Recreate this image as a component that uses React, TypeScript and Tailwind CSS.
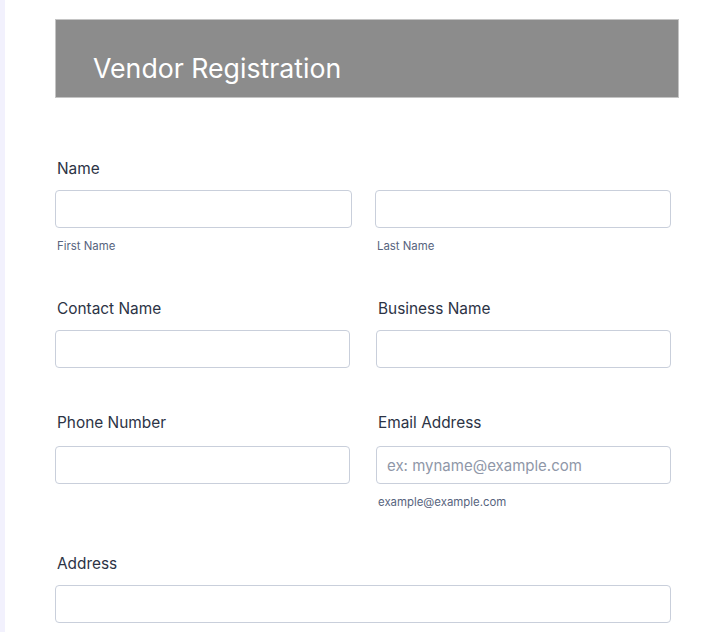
import React from "react";

const font = { fontFamily: "Inter, 'Noto Sans', sans-serif" };

function Label({ text, className = "" }: { text: string; className?: string }) {
  return (
    <label className={`block h-5 text-[15.4px] leading-[22px] text-[#2c3345] ${className}`}>{text}</label>
  );
}

function Input({ placeholder, className = "" }: { placeholder?: string; className?: string }) {
  return (
    <input
      type="text"
      placeholder={placeholder}
      className={`block h-[38px] rounded-[4px] border border-[#c9cfdb] bg-white px-[10px] text-[15px] text-[#2c3345] placeholder:text-[#8f97a8] outline-none ${className}`}
    />
  );
}

function Sub({ text, className = "" }: { text: string; className?: string }) {
  return <div className={`mt-[10px] h-4 text-[11.4px] leading-4 text-[#57647e] ${className}`}>{text}</div>;
}

export default function App() {
  return (
    <div className="flex h-[632px] w-[715px] overflow-hidden bg-white" style={font}>
      <div className="w-[5px] shrink-0 bg-[#f2f1fd]" />
      <div className="flex-1 pl-[50px] pt-[19px]">
        {/* header */}
        <div className="flex h-[79px] w-[624px] items-center border border-[#c4c4c4] bg-[#8c8c8c] pl-[37px] pt-[19px]">
          <h1 className="text-[26.7px] font-normal text-white">Vendor Registration</h1>
        </div>

        {/* Name */}
        <Label text="Name" className="ml-[2px] mt-[60px]" />
        <div className="mt-3 flex">
          <div>
            <Input className="w-[297px]" />
            <Sub text="First Name" className="ml-[2px]" />
          </div>
          <div className="ml-[23px]">
            <Input className="w-[296px]" />
            <Sub text="Last Name" className="ml-[2px]" />
          </div>
        </div>

        {/* Contact / Business */}
        <div className="mt-[44px] flex">
          <div>
            <Label text="Contact Name" className="ml-[2px]" />
            <Input className="mt-3 w-[295px]" />
          </div>
          <div className="ml-[26px]">
            <Label text="Business Name" className="ml-[2px]" />
            <Input className="mt-3 w-[295px]" />
          </div>
        </div>

        {/* Phone / Email */}
        <div className="mt-[44px] flex items-start">
          <div>
            <Label text="Phone Number" className="ml-[2px]" />
            <Input className="mt-[14px] w-[295px]" />
          </div>
          <div className="ml-[26px]">
            <Label text="Email Address" className="ml-[2px]" />
            <Input className="mt-[14px] w-[295px]" placeholder="ex: myname@example.com" />
            <Sub text="example@example.com" className="ml-[2px]" />
          </div>
        </div>

        {/* Address */}
        <Label text="Address" className="ml-[2px] mt-[43px]" />
        <Input className="mt-3 w-[616px]" />
      </div>
    </div>
  );
}
